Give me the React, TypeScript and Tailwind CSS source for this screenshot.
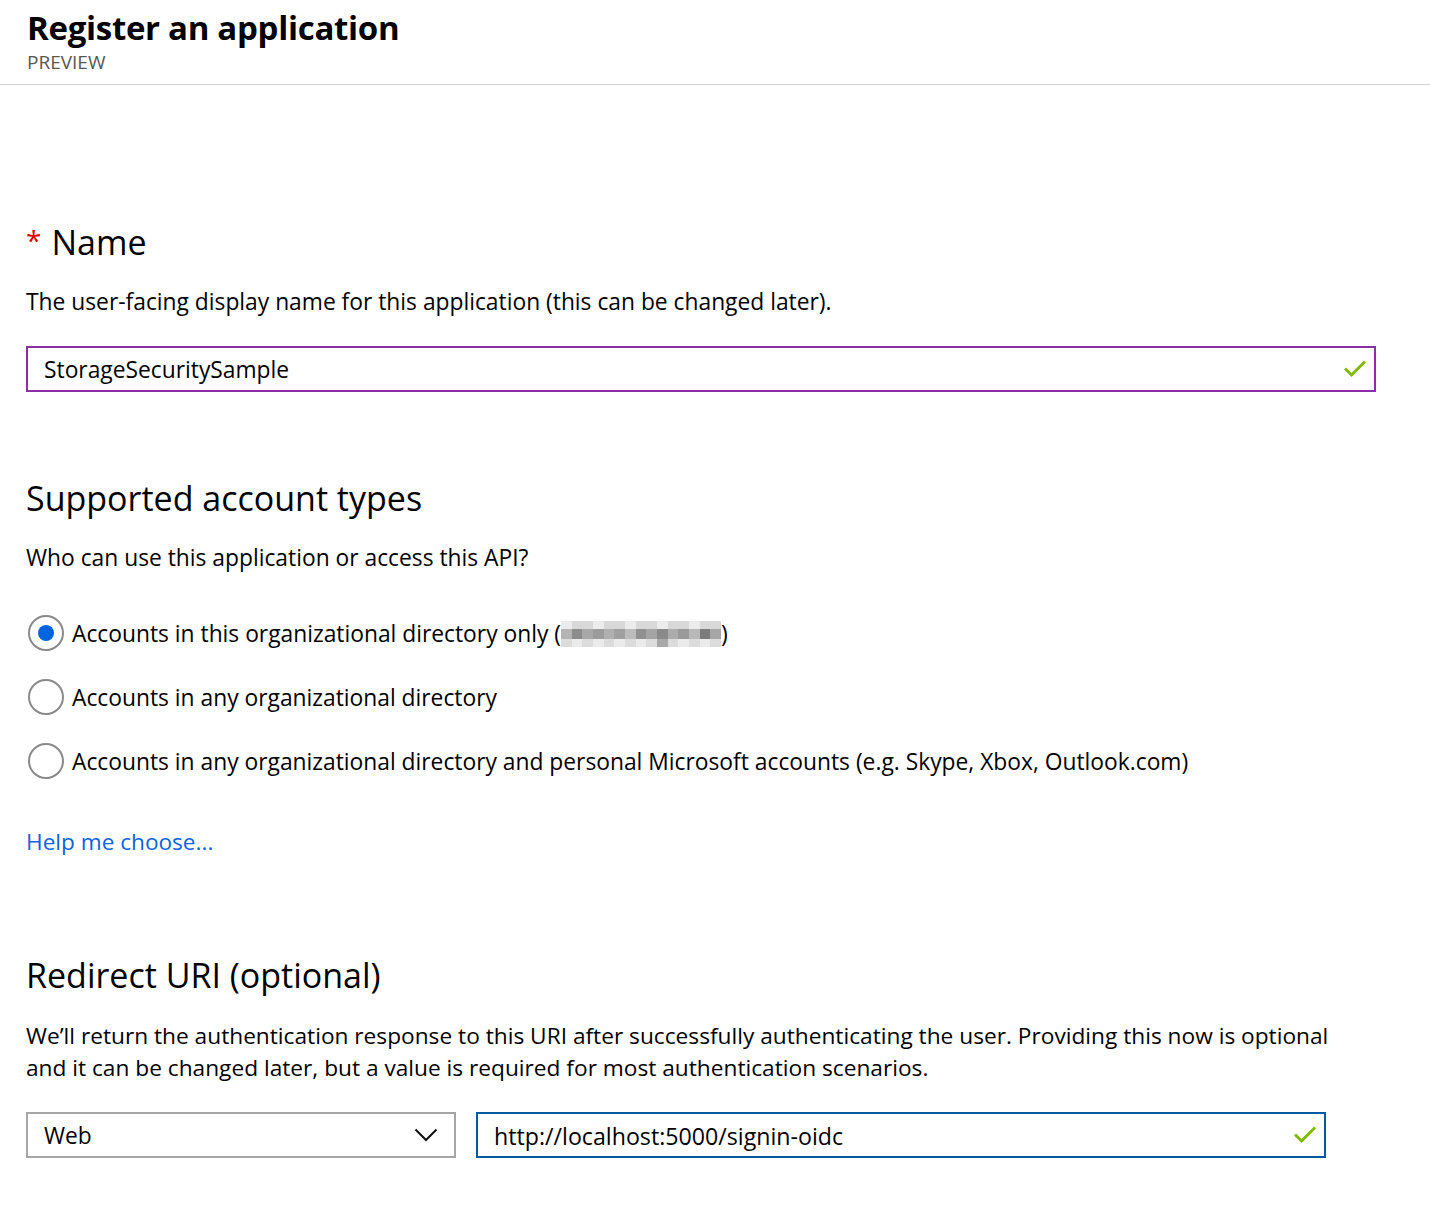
import React from 'react';

const font = { fontFamily: '"Open Sans", "Noto Sans", sans-serif' };

const Check = () => (
  <svg viewBox="0 0 22 18" className="w-[22px] h-[18px]" fill="none">
    <path d="M2 9.5L7.5 15L20 2.5" stroke="#7fba00" strokeWidth={3} strokeLinecap="square" />
  </svg>
);

const Chevron = () => (
  <svg viewBox="0 0 24 14" className="w-[24px] h-[14px]" fill="none">
    <path d="M1.5 1.5L12 12L22.5 1.5" stroke="#111" strokeWidth={2} />
  </svg>
);

const Radio = ({ checked, children }: { checked?: boolean; children: React.ReactNode }) => (
  <label className="flex items-center h-[40px] gap-[8px]">
    <span className="w-[36px] h-[36px] rounded-full border-2 border-[#8a8a8a] flex items-center justify-center shrink-0 ml-[2px]">
      {checked && <span className="w-[16px] h-[16px] rounded-full bg-[#0063df]" />}
    </span>
    <span className="text-[22.8px] leading-[30px] text-black pt-[1px]">{children}</span>
  </label>
);

// pixelated redacted tenant name
const redactShades = [
  '#b4b4b4', '#8c8c8c', '#a8a8a8', '#9c9c9c', '#b0b0b0', '#a0a0a0', '#bcbcbc', '#909090',
  '#a4a4a4', '#8a8a8a', '#acacac', '#9a9a9a', '#b8b8b8', '#7c7c7c', '#a6a6a6',
];

const Redacted = () => (
  <span className="inline-flex flex-col align-middle w-[160px] h-[26px] -mt-[2px]">
    <span className="flex h-[8px]">
      {redactShades.map((c, i) => (
        <span key={i} className="flex-1" style={{ background: i % 3 === 0 ? '#ececec' : '#d8d8d8' }} />
      ))}
    </span>
    <span className="flex h-[10px]">
      {redactShades.map((c, i) => (
        <span key={i} className="flex-1" style={{ background: c }} />
      ))}
    </span>
    <span className="flex h-[8px]">
      {redactShades.map((c, i) => (
        <span key={i} className="flex-1" style={{ background: i === 9 ? '#a8a8a8' : i % 2 ? '#ebebeb' : '#dcdcdc' }} />
      ))}
    </span>
  </span>
);

export default function App() {
  return (
    <div className="min-h-screen bg-white text-black" style={font}>
      <header className="pt-[9px] pb-[11px] border-b border-[#d4d4d4] px-[27px]">
        <h1 className="text-[33px] leading-[38px] font-bold tracking-[-0.3px]">Register an application</h1>
        <div className="mt-[5px] text-[19px] leading-[21px] text-[#575757]">PREVIEW</div>
      </header>

      <main className="px-[26px]">
        <h2 className="mt-[137px] text-[34px] leading-[40px] flex items-center">
          <span className="text-[#e00000] text-[28px] mr-[10px] self-start mt-[-2px]">*</span>
          Name
        </h2>
        <p className="mt-[25px] text-[22.8px] leading-[30px]">
          The user-facing display name for this application (this can be changed later).
        </p>
        <div className="mt-[29px] w-[1350px] h-[46px] border-2 border-[#8c2ea6] flex items-center justify-between pl-[16px] pr-[8px]">
          <span className="text-[22.8px] leading-[30px] pt-[1px]">StorageSecuritySample</span>
          <Check />
        </div>

        <h2 className="mt-[86px] text-[34px] leading-[40px]">Supported account types</h2>
        <p className="mt-[25px] text-[22.8px] leading-[30px]">Who can use this application or access this API?</p>
        <div className="mt-[40px] flex flex-col gap-[24px]">
          <Radio checked>
            Accounts in this organizational directory only (<Redacted />)
          </Radio>
          <Radio>Accounts in any organizational directory</Radio>
          <Radio>
            Accounts in any organizational directory and personal Microsoft accounts (e.g. Skype, Xbox, Outlook.com)
          </Radio>
        </div>
        <a href="#" className="block mt-[46px] text-[22.6px] leading-[30px] text-[#0a63e2] w-fit">
          Help me choose...
        </a>

        <h2 className="mt-[98px] text-[34px] leading-[40px]">Redirect URI (optional)</h2>
        <p className="mt-[25px] text-[22.7px] leading-[32px]">
          We’ll return the authentication response to this URI after successfully authenticating the user. Providing this now is optional
          <br />
          and it can be changed later, but a value is required for most authentication scenarios.
        </p>
        <div className="mt-[28px] flex gap-[20px]">
          <div className="w-[430px] h-[46px] border-2 border-[#a6a6a6] flex items-center justify-between pl-[16px] pr-[16px]">
            <span className="text-[22.8px] leading-[30px] pt-[1px]">Web</span>
            <Chevron />
          </div>
          <div className="w-[850px] h-[46px] border-2 border-[#005ba1] flex items-center justify-between pl-[16px] pr-[8px]">
            <span className="text-[23.2px] leading-[30px] pt-[1px]">http://localhost:5000/signin-oidc</span>
            <Check />
          </div>
        </div>
      </main>
    </div>
  );
}
